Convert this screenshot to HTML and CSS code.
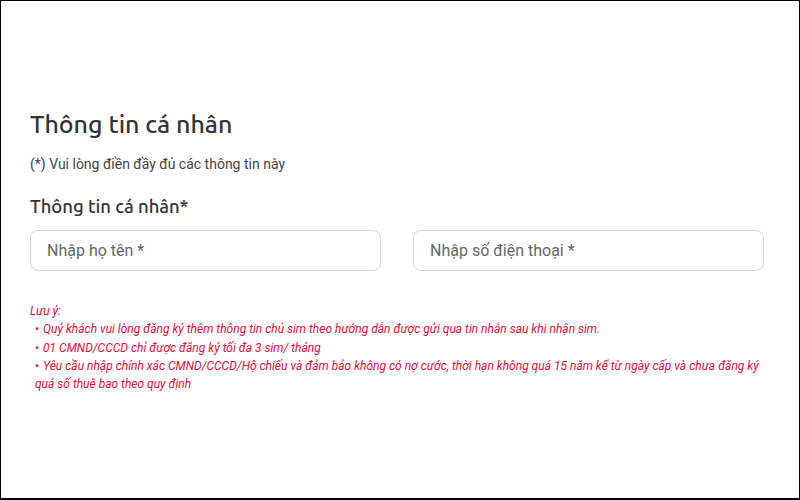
FILE: index.html
```html
<!DOCTYPE html>
<html lang="vi">
<head>
    <meta charset="UTF-8">
    <meta name="viewport" content="width=device-width, initial-scale=1.0">
    <title>Thông tin cá nhân</title>
    <link rel="stylesheet" href="styles.css">
</head>
<body>
    <div class="frame">
        <div class="container">
            <h1>Thông tin cá nhân</h1>
            <p class="hint">(*) Vui lòng điền đầy đủ các thông tin này</p>

            <h2>Thông tin cá nhân*</h2>
            <form class="fields">
                <input type="text" placeholder="Nhập họ tên *">
                <input type="tel" placeholder="Nhập số điện thoại *">
            </form>

            <div class="note">
                <p>Lưu ý:</p>
                <ul>
                    <li>Quý khách vui lòng đăng ký thêm thông tin chủ sim theo hướng dẫn được gửi qua tin nhắn sau khi nhận sim.</li>
                    <li>01 CMND/CCCD chỉ được đăng ký tối đa 3 sim/ tháng</li>
                    <li>Yêu cầu nhập chính xác CMND/CCCD/Hộ chiếu và đảm bảo không có nợ cước, thời hạn không quá 15 năm kể từ ngày cấp và chưa đăng ký quá số thuê bao theo quy định</li>
                </ul>
            </div>
        </div>
    </div>
</body>
</html>
```

FILE: styles.css
```css
html, body {
    margin: 0;
    padding: 0;
}

body {
    font-family: Roboto, 'Liberation Sans', sans-serif;
    background: #ffffff;
}

.frame {
    box-sizing: border-box;
    width: 800px;
    height: 500px;
    border: 1px solid #000;
    border-bottom-width: 2px;
    background: #ffffff;
}

.container {
    padding: 106px 35px 0 29px;
}

.container h1 {
    margin: 0;
    font-family: Ubuntu, 'Open Sans', Roboto, sans-serif;
    font-size: 25px;
    font-weight: 500;
    line-height: 34px;
    color: #333333;
}

.hint {
    margin: 13px 0 0;
    font-size: 14px;
    line-height: 20px;
    color: #444444;
}

.container h2 {
    margin: 19px 0 0;
    font-family: Ubuntu, 'Open Sans', Roboto, sans-serif;
    font-size: 18.5px;
    font-weight: 500;
    line-height: 26px;
    color: #333333;
}

.fields {
    display: grid;
    grid-template-columns: 1fr 1fr;
    gap: 32px;
    margin-top: 11px;
}

.fields input {
    box-sizing: border-box;
    height: 41px;
    padding: 0 16px;
    border: 1px solid #d9d9d9;
    border-radius: 8px;
    font-family: Roboto, sans-serif;
    font-size: 16px;
    color: #333;
    outline: none;
}

.fields input::placeholder {
    color: #666666;
}

.note {
    margin-top: 31px;
    font-size: 12px;
    font-style: italic;
    line-height: 18.3px;
    color: #e0103c;
}

.note p {
    margin: 0;
}

.note ul {
    margin: 0;
    padding: 0 0 0 5px;
    list-style: none;
}

.note li::before {
    content: '\2022';
    font-style: normal;
    margin-right: 4px;
}
```
